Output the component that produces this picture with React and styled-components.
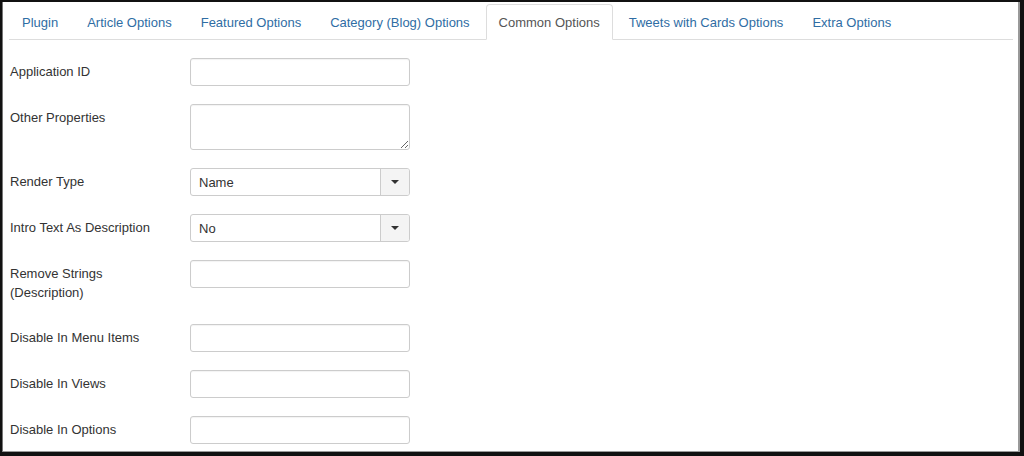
import styled, { createGlobalStyle } from "styled-components";

const GlobalStyle = createGlobalStyle`
  html, body {
    margin: 0;
    padding: 0;
    background: #111;
  }
  * {
    box-sizing: border-box;
  }
`;

const Frame = styled.div`
  width: 1024px;
  height: 456px;
  background: #111;
  padding: 2px 4px 4px 2px;
  font-family: "Liberation Sans", Arial, Helvetica, sans-serif;
`;

const Panel = styled.div`
  height: 100%;
  background: #fff;
  border-left: 1px solid #777;
  border-right: 2px solid #999;
  border-bottom: 1px solid #999;
  padding: 2px 5px 0 6px;
  overflow: hidden;
`;

const TabList = styled.ul`
  display: flex;
  margin: 0;
  padding: 0;
  list-style: none;
  border-bottom: 1px solid #ddd;
`;

const Tab = styled.li`
  height: 36px;
  margin-right: 3px;
  margin-bottom: -1px;
  padding: 0 12px;
  display: flex;
  align-items: center;
  font-size: 13px;
  color: ${(p) => (p.$active ? "#555" : "#2f6da4")};
  background: ${(p) => (p.$active ? "#fff" : "transparent")};
  border: 1px solid ${(p) => (p.$active ? "#ddd" : "transparent")};
  border-bottom-color: ${(p) => (p.$active ? "#fff" : "transparent")};
  border-radius: ${(p) => (p.$active ? "4px 4px 0 0" : "0")};
  cursor: pointer;
  white-space: nowrap;
`;

const Form = styled.div`
  padding: 18px 0 0 1px;
`;

const Group = styled.div`
  display: flex;
  margin-bottom: 18px;
`;

const Label = styled.label`
  width: 180px;
  padding: 4px 0;
  font-size: 13px;
  line-height: 19px;
  color: #333;
`;

const LabelText = styled.span`
  display: block;
  width: 168px;
`;

const Input = styled.input`
  width: 220px;
  height: 28px;
  padding: 4px 8px;
  border: 1px solid #ccc;
  border-radius: 3px;
  font-size: 13px;
  font-family: inherit;
  color: #555;
  box-shadow: inset 0 1px 1px rgba(0, 0, 0, 0.05);
`;

const TextArea = styled.textarea`
  width: 220px;
  height: 46px;
  padding: 4px 8px;
  border: 1px solid #ccc;
  border-radius: 3px;
  font-size: 13px;
  font-family: inherit;
  resize: both;
  box-shadow: inset 0 1px 1px rgba(0, 0, 0, 0.05);
`;

const Select = styled.div`
  width: 220px;
  height: 28px;
  display: flex;
  border: 1px solid #ccc;
  border-radius: 3px;
  font-size: 13px;
  color: #333;
  overflow: hidden;
`;

const SelectValue = styled.div`
  flex: 1;
  display: flex;
  align-items: center;
  padding-left: 8px;
`;

const SelectArrow = styled.div`
  width: 29px;
  display: flex;
  align-items: center;
  justify-content: center;
  background: #f4f4f4;
  border-left: 1px solid #ccc;
`;

const tabs = [
  "Plugin",
  "Article Options",
  "Featured Options",
  "Category (Blog) Options",
  "Common Options",
  "Tweets with Cards Options",
  "Extra Options",
];

const Caret = () => (
  <svg width="8" height="4" viewBox="0 0 8 4">
    <path d="M0 0 L8 0 L4 4 Z" fill="#333" />
  </svg>
);

const Field = ({ label, children }) => (
  <Group>
    <Label>
      <LabelText>{label}</LabelText>
    </Label>
    {children}
  </Group>
);

export default function App() {
  return (
    <>
      <GlobalStyle />
      <Frame>
        <Panel>
          <TabList>
            {tabs.map((t) => (
              <Tab key={t} $active={t === "Common Options"}>
                {t}
              </Tab>
            ))}
          </TabList>
          <Form>
            <Field label="Application ID">
              <Input />
            </Field>
            <Field label="Other Properties">
              <TextArea />
            </Field>
            <Field label="Render Type">
              <Select>
                <SelectValue>Name</SelectValue>
                <SelectArrow>
                  <Caret />
                </SelectArrow>
              </Select>
            </Field>
            <Field label="Intro Text As Description">
              <Select>
                <SelectValue>No</SelectValue>
                <SelectArrow>
                  <Caret />
                </SelectArrow>
              </Select>
            </Field>
            <Field label="Remove Strings (Description)">
              <Input />
            </Field>
            <Field label="Disable In Menu Items">
              <Input />
            </Field>
            <Field label="Disable In Views">
              <Input />
            </Field>
            <Field label="Disable In Options">
              <Input />
            </Field>
          </Form>
        </Panel>
      </Frame>
    </>
  );
}
